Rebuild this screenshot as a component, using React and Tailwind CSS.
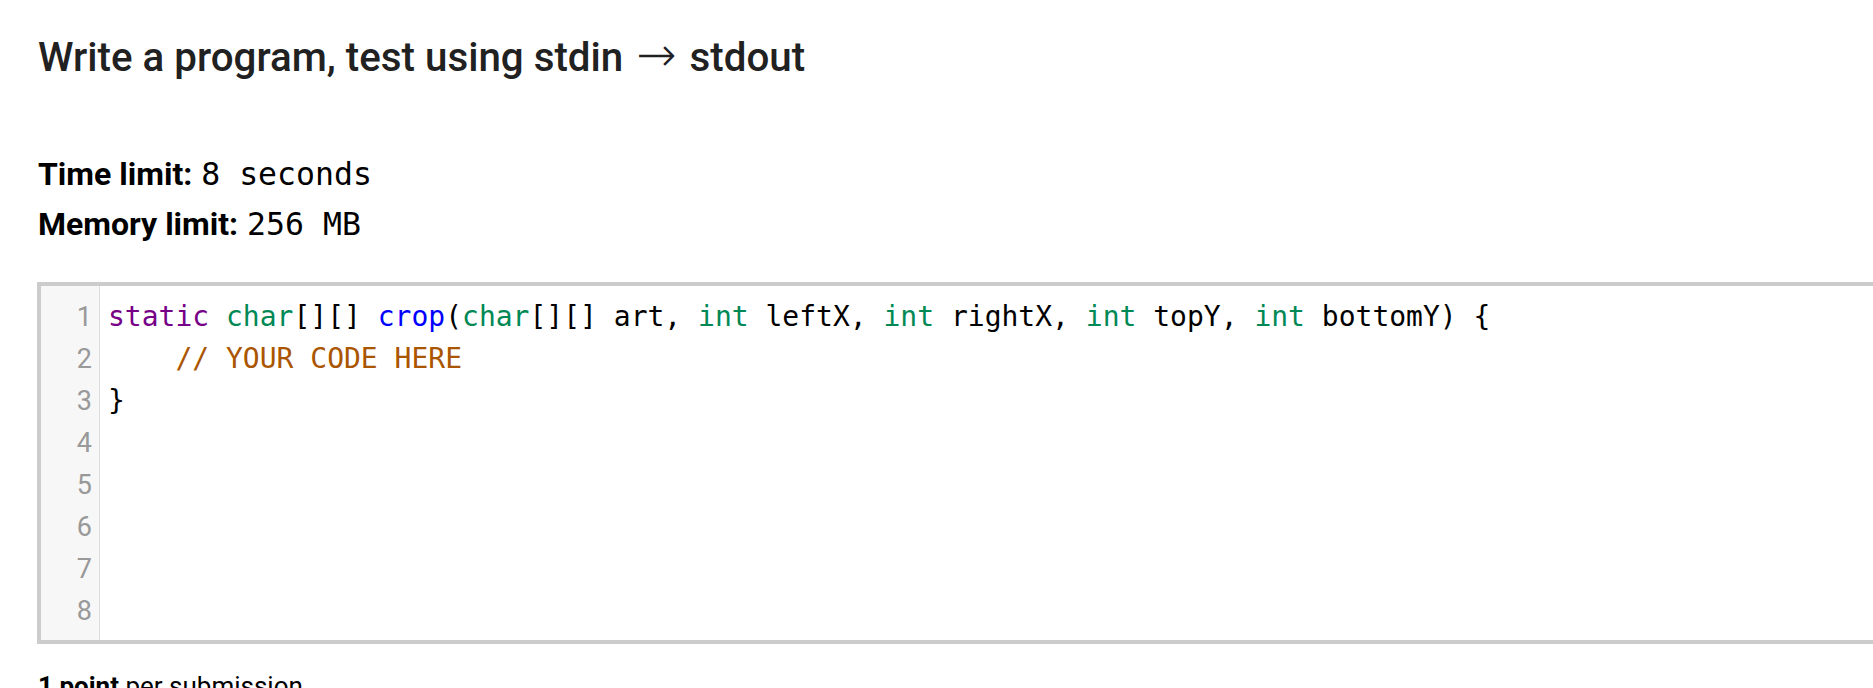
import React from "react"

const SANS = { fontFamily: "Roboto, 'Noto Sans', sans-serif" }

const LINES = [
  [
    ["static", "text-[#770088]"],
    [" "],
    ["char", "text-[#008855]"],
    ["[][] "],
    ["crop", "text-[#0000ff]"],
    ["("],
    ["char", "text-[#008855]"],
    ["[][] art, "],
    ["int", "text-[#008855]"],
    [" leftX, "],
    ["int", "text-[#008855]"],
    [" rightX, "],
    ["int", "text-[#008855]"],
    [" topY, "],
    ["int", "text-[#008855]"],
    [" bottomY) {"],
  ],
  [["    "], ["// YOUR CODE HERE", "text-[#aa5500]"]],
  [["}"]],
  [],
  [],
  [],
  [],
  [],
]

export default function App() {
  return (
    <div className="min-h-screen w-full overflow-hidden bg-white text-[#212121]" style={SANS}>
      <div className="pl-[38px] pt-[34px]">
        <h1 className="text-[40.3px] font-medium leading-[48px]">
          Write a program, test using stdin{" "}
          <span className="mx-[3px] font-['DejaVu_Sans',sans-serif] text-[48px] font-extralight leading-[0]">→</span> stdout
        </h1>

        <div className="mt-[67px] text-[32px] text-black">
          <div className="flex h-[50px] items-baseline leading-[50px]">
            <span className="font-bold">Time limit:</span>
            <span className="ml-[9px] whitespace-pre font-['DejaVu_Sans_Mono',monospace] text-[31.5px]">8 seconds</span>
          </div>
          <div className="flex h-[50px] items-baseline leading-[50px]">
            <span className="font-bold">Memory limit:</span>
            <span className="ml-[9px] whitespace-pre font-['DejaVu_Sans_Mono',monospace] text-[31.5px]">256 MB</span>
          </div>
        </div>

        <div className="mt-[33px] ml-[-1px] flex w-[1900px] border-[4px] border-[#cccccc] bg-white">
          <div className="w-[59px] shrink-0 border-r border-[#dddddd] bg-[#f7f7f7] pt-[10px] pb-[8px] pr-[7px] text-right text-[27px] leading-[42px] text-[#999999]">
            {LINES.map((_, i) => (
              <div key={i} className="h-[42px]">{i + 1}</div>
            ))}
          </div>
          <div className="flex-1 pt-[10px] pb-[8px] pl-[8px] font-['DejaVu_Sans_Mono',monospace] text-[28px] leading-[42px] text-black">
            {LINES.map((line, i) => (
              <div key={i} className="h-[42px] whitespace-pre">
                {line.map(([t, c], j) => (
                  <span key={j} className={c}>
                    {t}
                  </span>
                ))}
              </div>
            ))}
          </div>
        </div>

        <p className="mt-[27px] text-[26px] leading-[30px] text-black">
          <span className="font-bold">1 point</span> per submission
        </p>
      </div>
    </div>
  )
}
